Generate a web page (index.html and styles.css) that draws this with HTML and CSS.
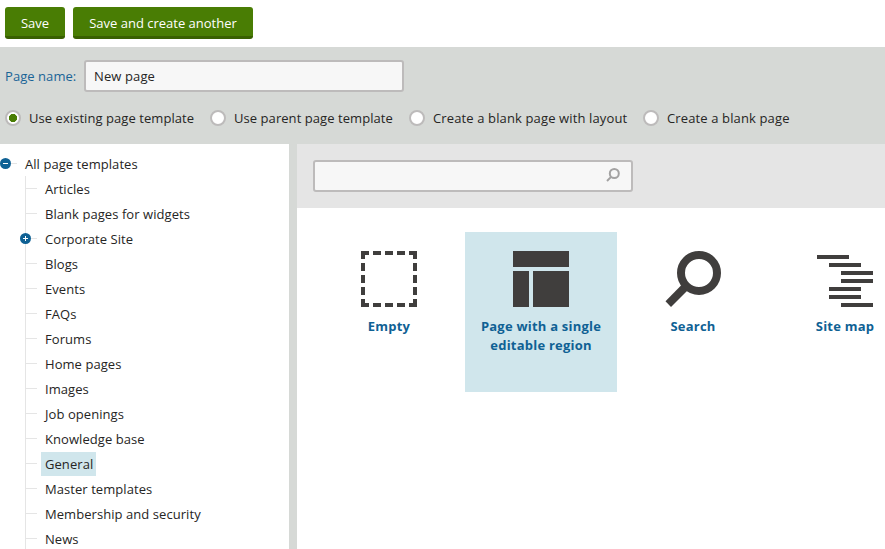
FILE: index.html
```html
<!DOCTYPE html>
<html lang="en">
<head>
<meta charset="utf-8">
<title>New page</title>
<link rel="stylesheet" href="styles.css">
</head>
<body>
<header class="actions">
  <button class="btn btn-save">Save</button>
  <button class="btn btn-another">Save and create another</button>
</header>
<section class="settings">
  <div class="name-row">
    <label class="name-label" for="name">Page name:</label>
    <input class="field" id="name" type="text" value="New page">
  </div>
  <div class="options">
    <label class="option"><span class="radio checked"></span><span>Use existing page template</span></label>
    <label class="option"><span class="radio"></span><span>Use parent page template</span></label>
    <label class="option"><span class="radio"></span><span class="wide">Create a blank page with layout</span></label>
    <label class="option"><span class="radio"></span><span class="wide">Create a blank page</span></label>
  </div>
</section>
<main class="content">
  <nav class="tree">
    <div class="root">
      <svg class="toggle" viewBox="0 0 11 11"><circle cx="5.5" cy="5.5" r="5.5"/><path d="M3 5.5h5"/></svg>
      <span>All page templates</span>
    </div>
    <ul class="nodes">
      <li><span>Articles</span></li>
      <li><span>Blank pages for widgets</span></li>
      <li><svg class="toggle" viewBox="0 0 11 11"><circle cx="5.5" cy="5.5" r="5.5"/><path d="M3 5.5h5M5.5 3v5"/></svg><span>Corporate Site</span></li>
      <li><span>Blogs</span></li>
      <li><span>Events</span></li>
      <li><span>FAQs</span></li>
      <li><span>Forums</span></li>
      <li><span>Home pages</span></li>
      <li><span>Images</span></li>
      <li><span>Job openings</span></li>
      <li><span>Knowledge base</span></li>
      <li><span class="selected">General</span></li>
      <li><span>Master templates</span></li>
      <li><span>Membership and security</span></li>
      <li><span>News</span></li>
      <li></li>
    </ul>
  </nav>
  <section class="templates">
    <div class="search">
      <div class="search-field">
        <svg viewBox="0 0 14 14"><circle cx="8.3" cy="5.5" r="4.5"/><path d="M5.1 8.9L1 13"/></svg>
      </div>
    </div>
    <div class="tiles">
      <div class="tile">
        <svg viewBox="0 0 56 56"><path d="M0 0h8v4H4v4H0zM12 0h8v4h-8zM24 0h8v4h-8zM36 0h8v4h-8zM48 0h8v8h-4V4h-4zM0 12h4v8H0zM0 24h4v8H0zM0 36h4v8H0zM52 12h4v8h-4zM52 24h4v8h-4zM52 36h4v8h-4zM0 48h4v4h4v4H0zM12 52h8v4h-8zM24 52h8v4h-8zM36 52h8v4h-8zM52 48h4v8h-8v-4h4z"/></svg>
        <span>Empty</span>
      </div>
      <div class="tile active">
        <svg viewBox="0 0 56 56"><path d="M0 0h56v16H0zM0 20h16v36H0zM20 20h36v36H20z"/></svg>
        <span>Page with a single<br>editable region</span>
      </div>
      <div class="tile">
        <svg viewBox="0 0 56 56"><circle class="lens" cx="34" cy="22" r="18"/><path d="M16.5 34L0.5 50.2L6 56L22.5 39.5z"/></svg>
        <span>Search</span>
      </div>
      <div class="tile">
        <svg viewBox="0 0 56 56"><path d="M0 4h32v4H0zM12 12h32v4H12zM24 20h32v4H24zM24 28h32v4H24zM12 36h32v4H12zM12 44h32v4H12zM24 52h32v4H24z"/></svg>
        <span>Site map</span>
      </div>
    </div>
  </section>
</main>
</body>
</html>
```
FILE: styles.css
```css
* { box-sizing: border-box; }
body {
  margin: 0;
  height: 549px;
  overflow: hidden;
  background: #fff;
  color: #262524;
  font: 13px/24px "Open Sans", "Noto Sans", sans-serif;
  letter-spacing: 0.06px;
  white-space: nowrap;
}
.actions { display: flex; gap: 8px; height: 47px; padding: 7px 5px; }
.btn {
  height: 32px;
  padding: 2px 0 0;
  border: 0;
  border-bottom: 3px solid #396001;
  border-radius: 3px;
  background: #497d04;
  color: #fff;
  font: inherit;
}
.btn-save { width: 60px; }
.btn-another { width: 180px; }
.settings { height: 97px; padding: 13px 5px 0; background: #d6d9d6; }
.name-row { display: flex; align-items: center; height: 32px; }
.name-label { width: 79px; color: #1a6496; }
.field {
  width: 320px;
  height: 32px;
  padding: 0 8px;
  border: 2px solid #bdbbbb;
  border-radius: 3px;
  background: #f7f7f7;
  color: #262524;
  font: inherit;
  letter-spacing: 0.12px;
}
.options { display: grid; grid-template-columns: 205px 199px 234px 1fr; margin-top: 14px; }
.option { display: flex; align-items: center; gap: 8px; }
.wide { letter-spacing: 0.13px; }
.radio { width: 16px; height: 16px; border: 2px solid #bdbbbb; border-radius: 50%; background: #fff; }
.checked { background: radial-gradient(circle, #497d04 3.8px, #fff 4.4px); }
.content { display: flex; height: 405px; }
.tree { width: 297px; padding-top: 7px; border-right: 8px solid #d6d9d6; overflow: hidden; }
.root { display: flex; align-items: center; height: 25px; }
.root::after { content: ""; order: 1; width: 6px; height: 1px; background: #e5e5e5; }
.root span { order: 2; margin-left: 8px; }
.toggle { display: block; flex: none; width: 11px; height: 11px; }
.toggle circle { fill: #0f6194; }
.toggle path { stroke: #fff; fill: none; }
.nodes { margin: 0 0 0 25px; padding: 0; border-left: 1px solid #e5e5e5; list-style: none; }
.nodes li { display: flex; align-items: center; height: 25px; }
.nodes li::before { content: ""; width: 11px; height: 1px; margin-right: 4px; background: #e5e5e5; }
.nodes li span { height: 24px; padding: 0 4px; }
.nodes .toggle { order: -1; margin-left: -6px; }
.nodes li:has(.toggle)::before { width: 6px; }
.nodes li:last-child::before { display: none; }
.nodes .selected { padding-right: 3px; background: #d0e6ec; }
.templates { flex: 1; min-width: 0; overflow: hidden; }
.search { height: 64px; padding: 16px; background: #e5e5e5; }
.search-field {
  display: flex;
  justify-content: flex-end;
  width: 320px;
  height: 32px;
  padding: 6px 11px 0 0;
  border: 2px solid #bdbbbb;
  border-radius: 3px;
  background: #f7f7f7;
}
.search-field svg { width: 14px; height: 14px; fill: none; stroke: #a3a2a2; stroke-width: 2; }
.tiles { display: flex; padding: 24px 16px; }
.tile {
  display: flex;
  flex: none;
  flex-direction: column;
  align-items: center;
  width: 152px;
  height: 160px;
  padding-top: 19px;
  color: #0f6194;
  font-weight: 700;
  line-height: 19px;
  letter-spacing: 0.22px;
  text-align: center;
}
.tile svg { width: 56px; height: 56px; margin-bottom: 10px; fill: #403e3d; }
.tile .lens { fill: none; stroke: #403e3d; stroke-width: 8; }
.active { background: #d0e6ec; }
```
